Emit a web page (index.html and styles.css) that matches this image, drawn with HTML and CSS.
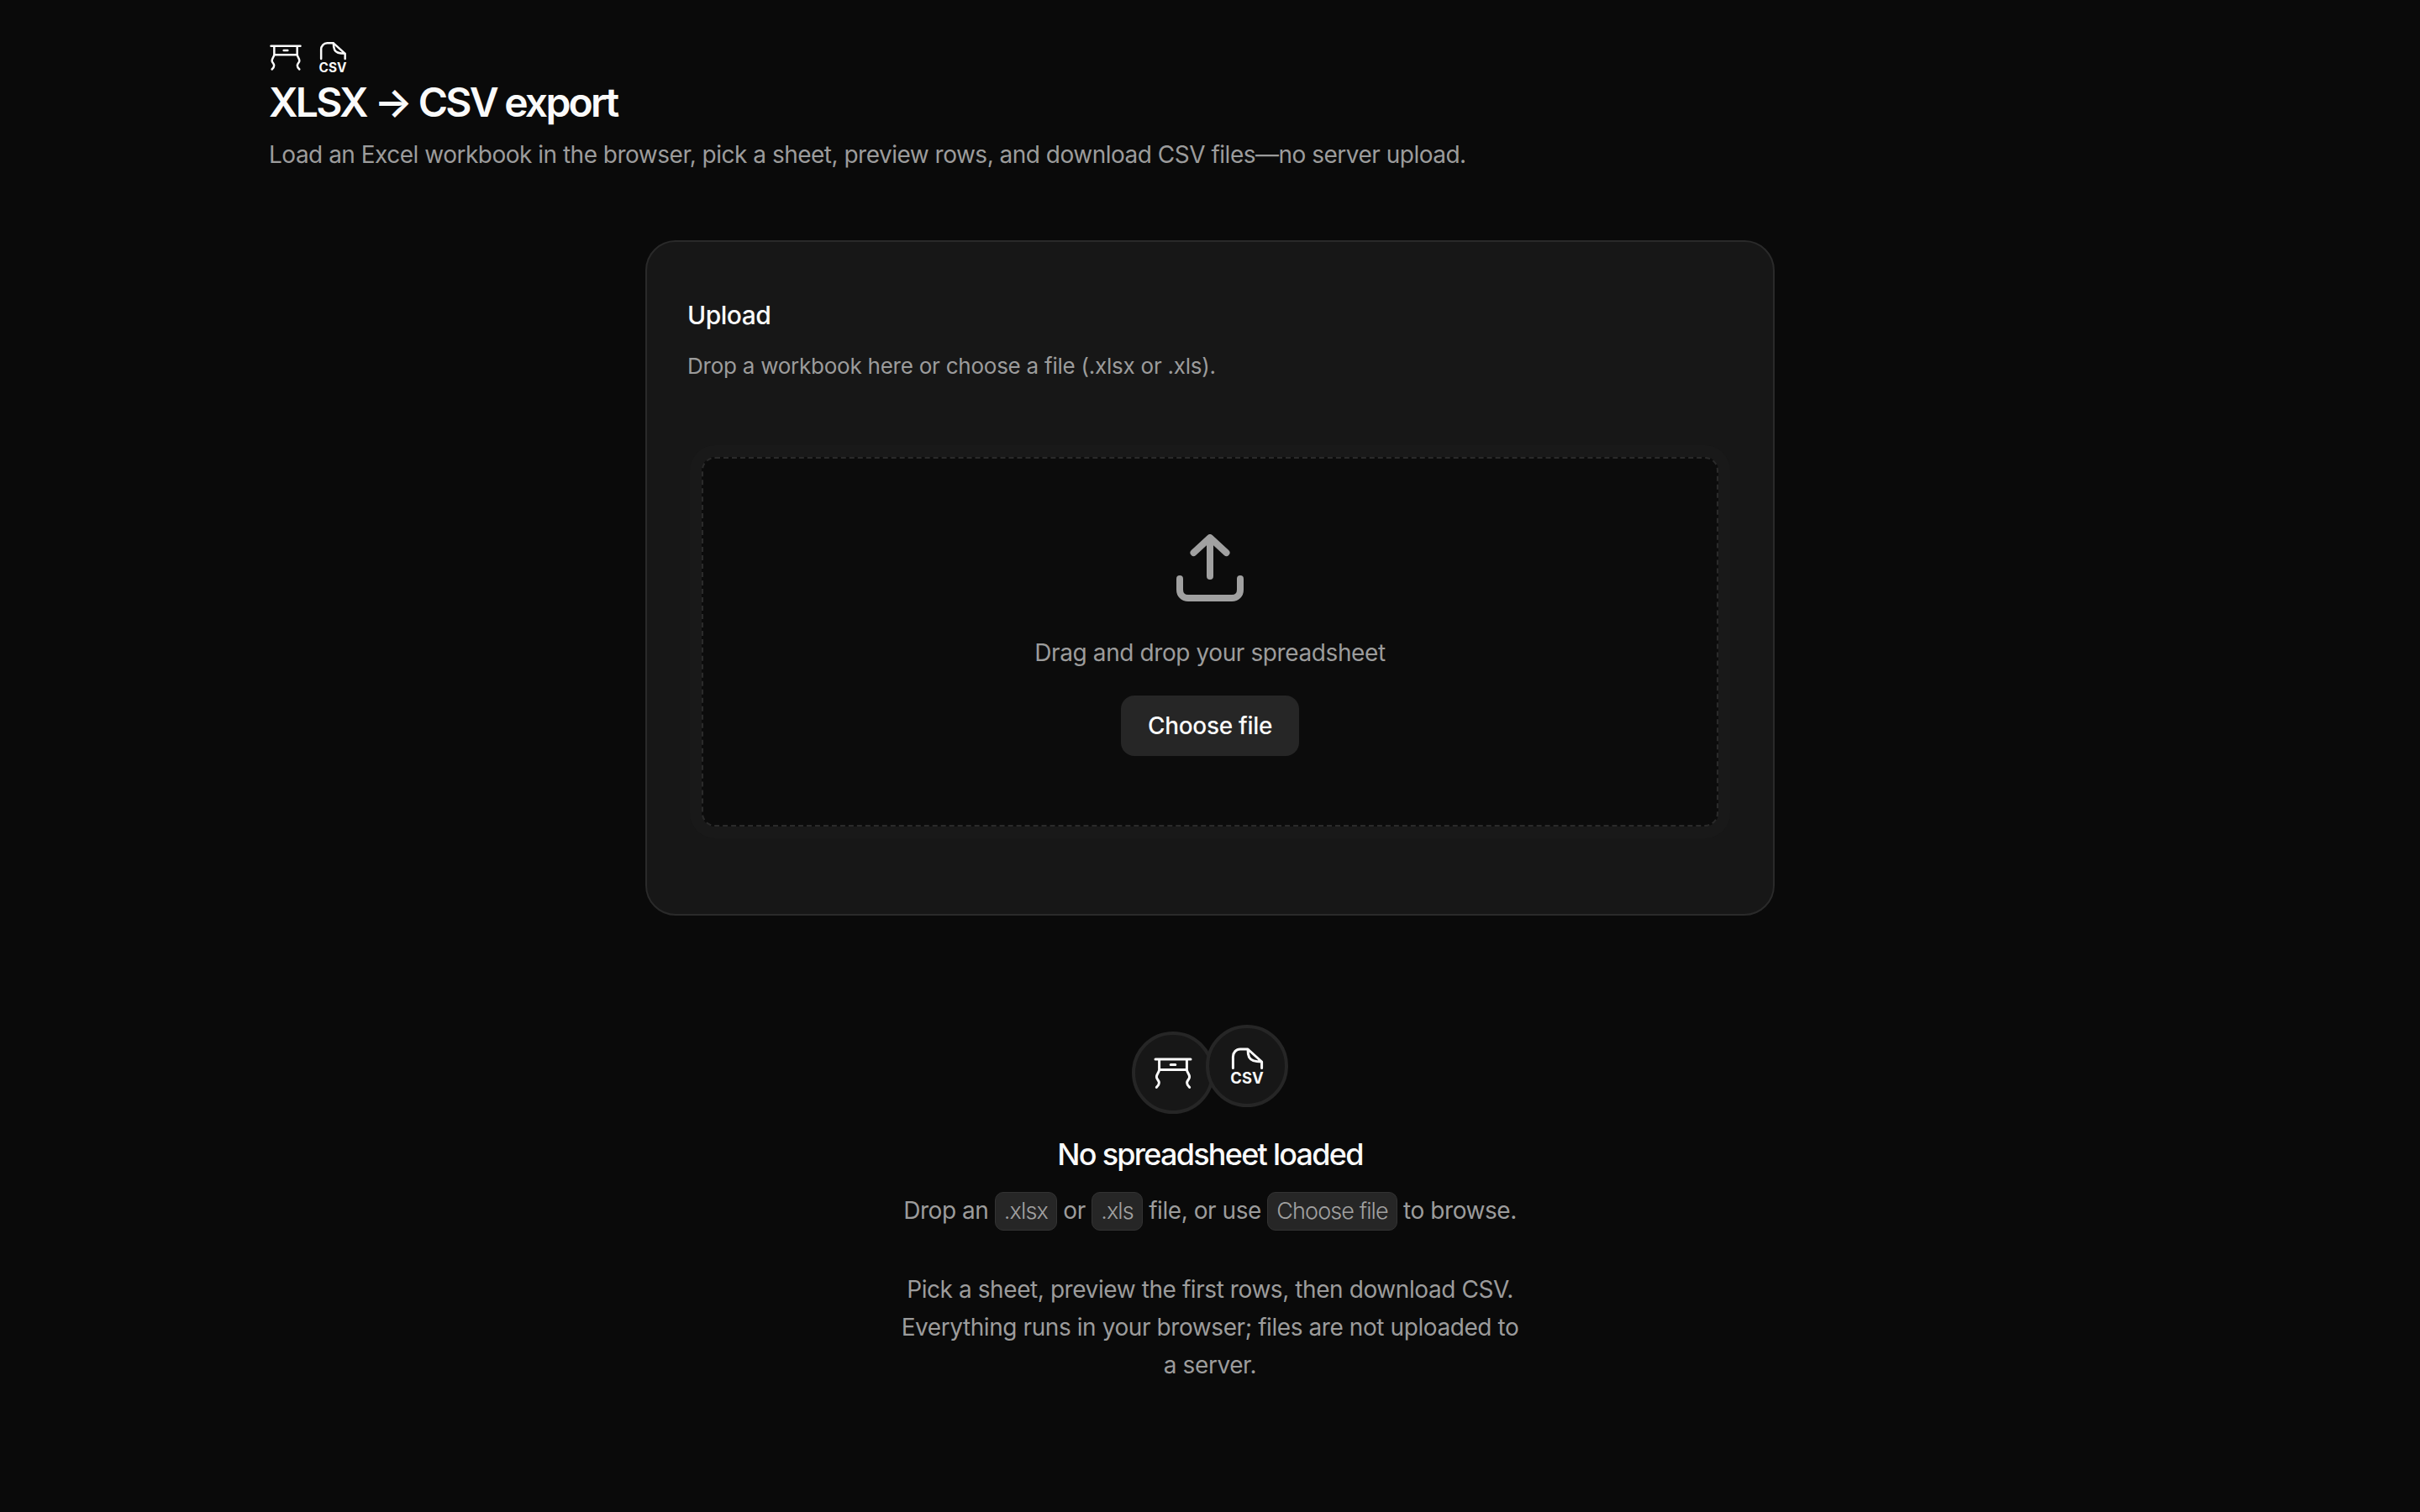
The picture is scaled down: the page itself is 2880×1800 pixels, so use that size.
FILE: index.html
```html
<!DOCTYPE html>
<html lang="en">
<head>
    <meta charset="UTF-8">
    <meta name="viewport" content="width=device-width, initial-scale=1.0">
    <title>XLSX to CSV export</title>
    <link rel="stylesheet" href="styles.css">
</head>
<body>
    <div class="page">
        <header class="page-header">
            <div class="header-icons">
                <svg class="icon icon-small" viewBox="0 0 24 24">
                    <path d="M1.500 4h21M3.800 4v6.300h16.400V4M10.600 7.200h2.800M3.800 10.300C3.600 12 2.200 13 2.200 14.500 2.200 16 3.700 16.500 3.700 18 3.700 19 3 20 2.200 20.700M20.200 10.300C20.400 12 21.800 13 21.800 14.500 21.800 16 20.300 16.500 20.300 18 20.300 19 21 20 21.800 20.700"/>
                </svg>
                <svg class="icon icon-small" viewBox="0 0 24 24">
                    <path d="M3.700 13.200V6.500C3.700 4 5.500 2 8 2h4.500l8.300 7.500v3.700M12.500 2c0 0 0 3 .8 4.800 1 2 4 2.700 7.500 2.700"/>
                    <text class="icon-text" x="12" y="22.700" text-anchor="middle">CSV</text>
                </svg>
            </div>
            <h1>XLSX → CSV export</h1>
            <p class="subtitle">Load an Excel workbook in the browser, pick a sheet, preview rows, and download CSV files—no server upload.</p>
        </header>

        <section class="card">
            <h2>Upload</h2>
            <p class="card-hint">Drop a workbook here or choose a file (.xlsx or .xls).</p>
            <div class="dropzone">
                <svg class="upload-icon" viewBox="0 0 80 80">
                    <path d="M4 53v13c0 6 4 10 10 10h52c6 0 10-4 10-10V53M40 50V6M20.500 22L40 4l19.500 18"/>
                </svg>
                <p class="drop-text">Drag and drop your spreadsheet</p>
                <button type="button">Choose file</button>
            </div>
        </section>

        <section class="empty">
            <div class="empty-icons">
                <div class="circle circle-low">
                    <svg class="icon icon-large" viewBox="0 0 24 24">
                        <path d="M1.500 4h21M3.800 4v6.300h16.400V4M10.600 7.200h2.800M3.800 10.300C3.600 12 2.200 13 2.200 14.500 2.200 16 3.700 16.500 3.700 18 3.700 19 3 20 2.200 20.700M20.200 10.300C20.400 12 21.800 13 21.800 14.500 21.800 16 20.300 16.500 20.300 18 20.300 19 21 20 21.800 20.700"/>
                    </svg>
                </div>
                <div class="circle">
                    <svg class="icon icon-large" viewBox="0 0 24 24">
                        <path d="M3.700 13.200V6.500C3.700 4 5.500 2 8 2h4.500l8.300 7.500v3.700M12.500 2c0 0 0 3 .8 4.800 1 2 4 2.700 7.500 2.700"/>
                        <text class="icon-text" x="12" y="22.700" text-anchor="middle">CSV</text>
                    </svg>
                </div>
            </div>
            <h3>No spreadsheet loaded</h3>
            <p class="empty-line">Drop an <span class="chip">.xlsx</span> or <span class="chip">.xls</span> file, or use <span class="chip">Choose file</span> to browse.</p>
            <p class="empty-note">Pick a sheet, preview the first rows, then download CSV. Everything runs in your browser; files are not uploaded to a server.</p>
        </section>
    </div>
</body>
</html>
```

FILE: styles.css
```css
* {
    box-sizing: border-box;
}

body {
    margin: 0;
    padding: 0;
    height: 1800px;
    overflow: hidden;
    font-family: Inter, "Noto Sans", sans-serif;
    background-color: #0a0a0a;
    color: #fafafa;
}

.page {
    width: 2240px;
    margin: 0 auto;
    padding-top: 48px;
}

.header-icons {
    display: flex;
    gap: 16px;
    height: 40px;
}

.icon {
    fill: none;
    stroke: #fafafa;
    stroke-width: 1.5;
    stroke-linecap: round;
    stroke-linejoin: round;
    display: block;
    overflow: visible;
}

.icon-small {
    width: 40px;
    height: 40px;
}

.icon-large {
    width: 48px;
    height: 48px;
}

.icon-text {
    font-family: Inter, sans-serif;
    font-size: 9.2px;
    font-weight: 700;
    letter-spacing: 0;
    fill: #fafafa;
    stroke: none;
}

h1 {
    margin: 4px 0 0;
    font-size: 48px;
    line-height: 60px;
    font-weight: 600;
    letter-spacing: -2.75px;
}

.subtitle {
    margin: 12px 0 0;
    font-size: 28px;
    line-height: 40px;
    letter-spacing: -0.5px;
    color: #9c9c9c;
}

.card {
    width: 1344px;
    height: 804px;
    margin: 82px auto 0;
    padding: 69px 48px 0;
    background-color: #171717;
    border: 2px solid #2a2a2a;
    border-radius: 36px;
}

h2 {
    margin: 0;
    font-size: 30px;
    line-height: 36px;
    font-weight: 450;
    letter-spacing: -0.5px;
}

.card-hint {
    margin: 25px 0 0;
    font-size: 26px;
    line-height: 36px;
    letter-spacing: -0.24px;
    color: #9c9c9c;
}

.dropzone {
    display: flex;
    flex-direction: column;
    align-items: center;
    width: 1210px;
    height: 440px;
    margin: 90px 0 0 17px;
    padding-top: 90px;
    background-color: #0c0c0c;
    border: 2px dashed #2a2a2a;
    border-radius: 16px;
    box-shadow: 0 0 0 14px #191919;
}

.upload-icon {
    flex: none;
    width: 80px;
    height: 80px;
    fill: none;
    stroke: #a1a1a1;
    stroke-width: 8;
    stroke-linecap: round;
    stroke-linejoin: round;
}

.drop-text {
    margin: 39px 0 0;
    font-size: 28px;
    line-height: 44px;
    letter-spacing: -0.4px;
    color: #9c9c9c;
}

button {
    width: 212px;
    height: 72px;
    margin-top: 29px;
    padding: 0;
    font-family: inherit;
    font-size: 28px;
    font-weight: 450;
    letter-spacing: -0.3px;
    color: #fafafa;
    background-color: #262626;
    border: none;
    border-radius: 16px;
}

.empty {
    display: flex;
    flex-direction: column;
    align-items: center;
    margin-top: 130px;
    text-align: center;
}

.empty-icons {
    display: flex;
    align-items: flex-start;
}

.circle {
    display: flex;
    align-items: center;
    justify-content: center;
    width: 98px;
    height: 98px;
    background-color: #171717;
    border: 4px solid #262626;
    border-radius: 50%;
}

.circle-low {
    margin-top: 8px;
    margin-right: -10px;
}

h3 {
    margin: 26px 0 0;
    font-size: 36px;
    line-height: 44px;
    font-weight: 450;
    letter-spacing: -1.75px;
}

.empty-line {
    margin: 22px 0 0;
    font-size: 28px;
    line-height: 46px;
    letter-spacing: -0.45px;
    color: #9c9c9c;
}

.chip {
    display: inline-block;
    padding: 0 10px;
    line-height: 44px;
    font-size: 27px;
    font-weight: 300;
    letter-spacing: -0.9px;
    color: #a1a1a1;
    background-color: #262626;
    border: 1px solid #333;
    border-radius: 10px;
}

.empty-note {
    width: 745px;
    margin: 48px 0 0;
    font-size: 28px;
    line-height: 45px;
    letter-spacing: -0.42px;
    color: #9c9c9c;
}
```
